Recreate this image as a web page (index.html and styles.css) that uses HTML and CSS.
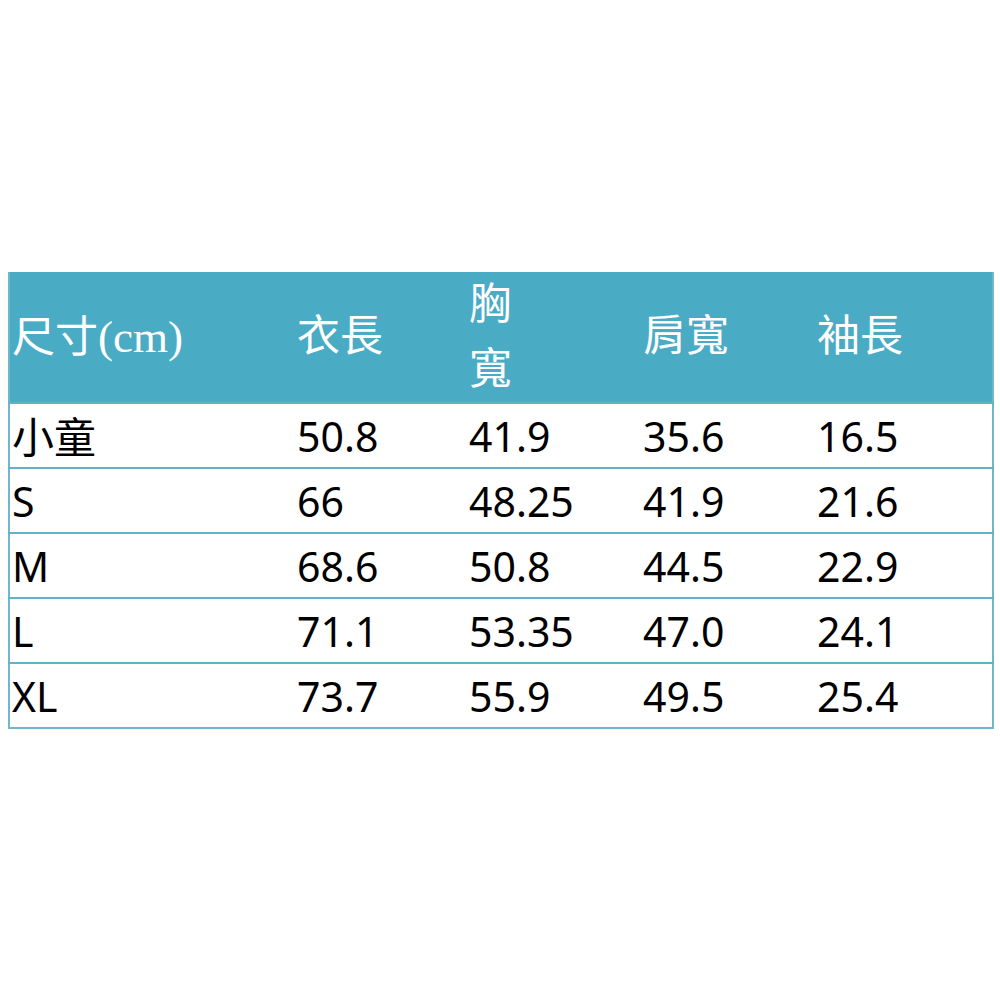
FILE: index.html
```html
<!DOCTYPE html>
<html>
<head>
<meta charset="utf-8">
<link rel="stylesheet" href="styles.css">
</head>
<body>
<div class="page">
<table class="sizes">
  <colgroup>
    <col class="c1"><col class="c2"><col class="c3"><col class="c4"><col class="c5">
  </colgroup>
  <thead>
    <tr>
      <th>尺寸<span class="lat">(cm)</span></th>
      <th>衣長</th>
      <th class="two">胸<br>寬</th>
      <th>肩寬</th>
      <th>袖長</th>
    </tr>
  </thead>
  <tbody>
    <tr><td class="cjk">小童</td><td>50.8</td><td>41.9</td><td>35.6</td><td>16.5</td></tr>
    <tr><td>S</td><td>66</td><td>48.25</td><td>41.9</td><td>21.6</td></tr>
    <tr><td>M</td><td>68.6</td><td>50.8</td><td>44.5</td><td>22.9</td></tr>
    <tr><td>L</td><td>71.1</td><td>53.35</td><td>47.0</td><td>24.1</td></tr>
    <tr><td>XL</td><td>73.7</td><td>55.9</td><td>49.5</td><td>25.4</td></tr>
  </tbody>
</table>
</div>
</body>
</html>
```
FILE: styles.css
```css
html, body {
  margin: 0;
  padding: 0;
  background: #ffffff;
}
.page {
  padding: 272px 8px 0 8px;
}
.sizes {
  width: 984px;
  border-collapse: collapse;
  table-layout: fixed;
  border-left: 2px solid #6fb8ca;
  border-right: 2px solid #6fb8ca;
  border-bottom: 2px solid #6fb8ca;
}
.c1 { width: 286px; }
.c2 { width: 172px; }
.c3 { width: 174px; }
.c4 { width: 174px; }
.c5 { width: 178px; }
.sizes th {
  background: #4aabc5;
  color: #ffffff;
  height: 128px;
  padding: 0 0 0 2px;
  text-align: left;
  font-weight: normal;
  font-family: "Liberation Serif", "Noto Sans CJK TC", serif;
  font-size: 43px;
  line-height: 52px;
  vertical-align: middle;
  box-sizing: border-box;
}
.sizes th .lat {
  font-size: 45px;
}
.sizes th.two {
  line-height: 65px;
  padding-top: 0;
}
.sizes td {
  height: 65px;
  padding: 2px 0 0 2px;
  box-sizing: border-box;
  border-top: 2px solid #5fb2c7;
  font-family: "Noto Sans", "Noto Sans CJK TC", sans-serif;
  font-size: 41px;
  color: #000000;
  line-height: 1;
  vertical-align: middle;
  text-align: left;
}
.sizes td.cjk {
  font-size: 42px;
}
```
